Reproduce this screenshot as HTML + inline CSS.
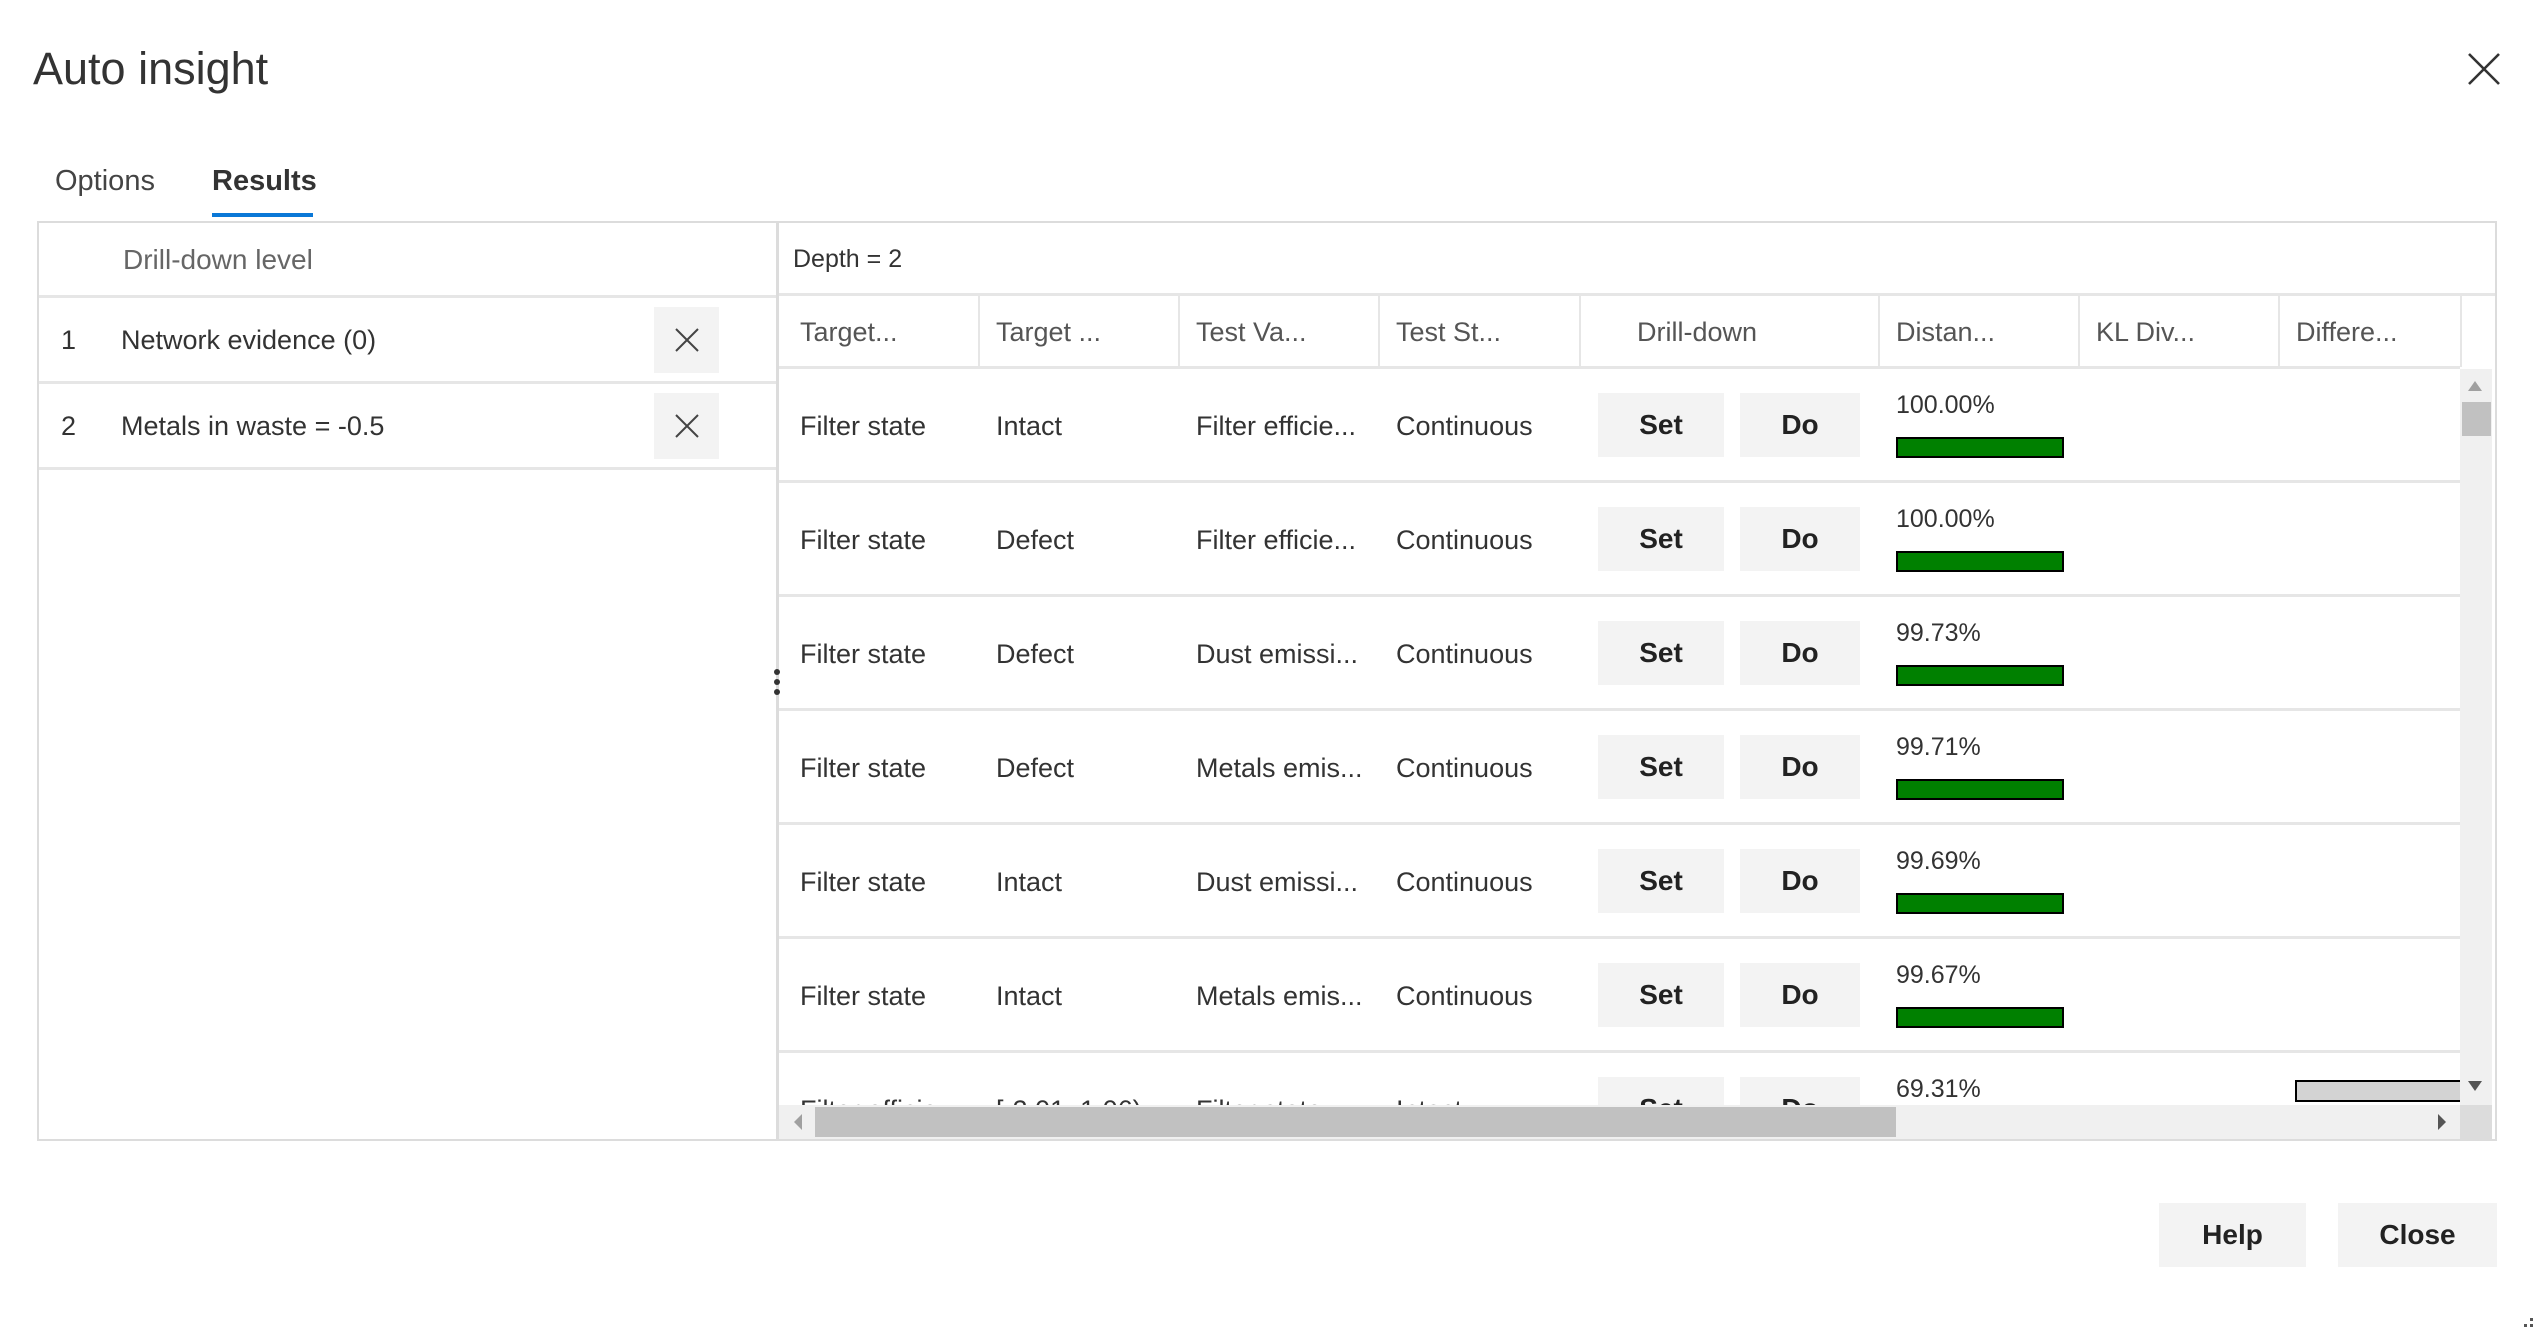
<!DOCTYPE html>
<html><head><meta charset="utf-8"><style>
*{margin:0;padding:0;box-sizing:border-box}
body{width:2534px;height:1330px;background:#fff;font-family:"Liberation Sans",sans-serif;color:#333;position:relative;overflow:hidden}
.a{position:absolute;white-space:nowrap}
.t{font-size:27px;line-height:32px}
.btn{position:absolute;background:#f3f3f3;font-weight:bold;font-size:28px;display:flex;align-items:center;justify-content:center;color:#222}
.hl{position:absolute;background:#e6e6e6}
.bar{position:absolute;width:168px;height:21px;background:#008000;border:2px solid #000}
</style></head><body>
<div class="a" style="left:33px;top:42px;font-size:45px;line-height:54px;color:#333">Auto insight</div>
<svg class="a" style="left:2467px;top:52px" width="34" height="34" viewBox="0 0 34 34"><path d="M2 2L32 32M32 2L2 32" stroke="#333" stroke-width="2.6"/></svg>
<div class="a" style="left:55px;top:163px;font-size:29px;line-height:36px;color:#444">Options</div>
<div class="a" style="left:212px;top:163px;font-size:29px;line-height:36px;font-weight:bold;color:#333">Results</div>
<div class="a" style="left:212px;top:213px;width:101px;height:4px;background:#0a78d7"></div>

<div class="a" style="left:37px;top:221px;width:2460px;height:920px;border:2px solid #dcdcdc"></div>
<!-- left panel -->
<div class="a" style="left:776px;top:221px;width:3px;height:920px;background:#dcdcdc"></div>
<div class="a t" style="left:123px;top:244px;color:#666;font-size:28px">Drill-down level</div>
<div class="hl" style="left:39px;top:295px;width:737px;height:3px"></div>
<div class="a t" style="left:61px;top:324px">1</div>
<div class="a t" style="left:121px;top:324px">Network evidence (0)</div>
<div class="btn" style="left:654px;top:307px;width:65px;height:66px;font-weight:normal"><svg width="24" height="24" viewBox="0 0 24 24"><path d="M1 1L23 23M23 1L1 23" stroke="#444" stroke-width="2"/></svg></div>
<div class="hl" style="left:39px;top:381px;width:737px;height:3px"></div>
<div class="a t" style="left:61px;top:410px">2</div>
<div class="a t" style="left:121px;top:410px">Metals in waste = -0.5</div>
<div class="btn" style="left:654px;top:393px;width:65px;height:66px;font-weight:normal"><svg width="24" height="24" viewBox="0 0 24 24"><path d="M1 1L23 23M23 1L1 23" stroke="#444" stroke-width="2"/></svg></div>
<div class="hl" style="left:39px;top:467px;width:737px;height:3px"></div>
<svg class="a" style="left:773px;top:668px" width="8" height="28"><circle cx="4" cy="4" r="3" fill="#333"/><circle cx="4" cy="14" r="3" fill="#333"/><circle cx="4" cy="24" r="3" fill="#333"/></svg>

<!-- right panel -->
<div class="a t" style="left:793px;top:243px;font-size:25px">Depth = 2</div>
<div class="hl" style="left:779px;top:293px;width:1716px;height:3px"></div>
<div class="hl" style="left:779px;top:366px;width:1681px;height:3px"></div>
<div class="hl" style="left:978px;top:295px;width:2px;height:72px"></div>
<div class="hl" style="left:1178px;top:295px;width:2px;height:72px"></div>
<div class="hl" style="left:1378px;top:295px;width:2px;height:72px"></div>
<div class="hl" style="left:1579px;top:295px;width:2px;height:72px"></div>
<div class="hl" style="left:1878px;top:295px;width:2px;height:72px"></div>
<div class="hl" style="left:2078px;top:295px;width:2px;height:72px"></div>
<div class="hl" style="left:2278px;top:295px;width:2px;height:72px"></div>
<div class="hl" style="left:2460px;top:295px;width:2px;height:72px"></div>
<div class="a t" style="left:800px;top:316px;color:#555">Target...</div>
<div class="a t" style="left:996px;top:316px;color:#555">Target ...</div>
<div class="a t" style="left:1196px;top:316px;color:#555">Test Va...</div>
<div class="a t" style="left:1396px;top:316px;color:#555">Test St...</div>
<div class="a t" style="left:1637px;top:316px;color:#555">Drill-down</div>
<div class="a t" style="left:1896px;top:316px;color:#555">Distan...</div>
<div class="a t" style="left:2096px;top:316px;color:#555">KL Div...</div>
<div class="a t" style="left:2296px;top:316px;color:#555">Differe...</div>

<div class="a" style="left:779px;top:369px;width:1681px;height:736px;overflow:hidden">
<div style="position:absolute;left:0;top:0;width:1681px">
<!-- rows inserted -->
<div style="position:absolute;left:0;top:0;width:1681px;height:114px">
<div class="a t" style="left:21px;top:41px">Filter state</div><div class="a t" style="left:217px;top:41px">Intact</div><div class="a t" style="left:417px;top:41px">Filter efficie...</div><div class="a t" style="left:617px;top:41px">Continuous</div>
<div class="btn" style="left:819px;top:24px;width:126px;height:64px">Set</div><div class="btn" style="left:961px;top:24px;width:120px;height:64px">Do</div>
<div class="a t" style="left:1117px;top:20px;font-size:25px">100.00%</div><div class="bar" style="left:1117px;top:68px"></div>
<div class="hl" style="left:0;top:111px;width:1681px;height:3px"></div></div>
<div style="position:absolute;left:0;top:114px;width:1681px;height:114px">
<div class="a t" style="left:21px;top:41px">Filter state</div><div class="a t" style="left:217px;top:41px">Defect</div><div class="a t" style="left:417px;top:41px">Filter efficie...</div><div class="a t" style="left:617px;top:41px">Continuous</div>
<div class="btn" style="left:819px;top:24px;width:126px;height:64px">Set</div><div class="btn" style="left:961px;top:24px;width:120px;height:64px">Do</div>
<div class="a t" style="left:1117px;top:20px;font-size:25px">100.00%</div><div class="bar" style="left:1117px;top:68px"></div>
<div class="hl" style="left:0;top:111px;width:1681px;height:3px"></div></div>
<div style="position:absolute;left:0;top:228px;width:1681px;height:114px">
<div class="a t" style="left:21px;top:41px">Filter state</div><div class="a t" style="left:217px;top:41px">Defect</div><div class="a t" style="left:417px;top:41px">Dust emissi...</div><div class="a t" style="left:617px;top:41px">Continuous</div>
<div class="btn" style="left:819px;top:24px;width:126px;height:64px">Set</div><div class="btn" style="left:961px;top:24px;width:120px;height:64px">Do</div>
<div class="a t" style="left:1117px;top:20px;font-size:25px">99.73%</div><div class="bar" style="left:1117px;top:68px"></div>
<div class="hl" style="left:0;top:111px;width:1681px;height:3px"></div></div>
<div style="position:absolute;left:0;top:342px;width:1681px;height:114px">
<div class="a t" style="left:21px;top:41px">Filter state</div><div class="a t" style="left:217px;top:41px">Defect</div><div class="a t" style="left:417px;top:41px">Metals emis...</div><div class="a t" style="left:617px;top:41px">Continuous</div>
<div class="btn" style="left:819px;top:24px;width:126px;height:64px">Set</div><div class="btn" style="left:961px;top:24px;width:120px;height:64px">Do</div>
<div class="a t" style="left:1117px;top:20px;font-size:25px">99.71%</div><div class="bar" style="left:1117px;top:68px"></div>
<div class="hl" style="left:0;top:111px;width:1681px;height:3px"></div></div>
<div style="position:absolute;left:0;top:456px;width:1681px;height:114px">
<div class="a t" style="left:21px;top:41px">Filter state</div><div class="a t" style="left:217px;top:41px">Intact</div><div class="a t" style="left:417px;top:41px">Dust emissi...</div><div class="a t" style="left:617px;top:41px">Continuous</div>
<div class="btn" style="left:819px;top:24px;width:126px;height:64px">Set</div><div class="btn" style="left:961px;top:24px;width:120px;height:64px">Do</div>
<div class="a t" style="left:1117px;top:20px;font-size:25px">99.69%</div><div class="bar" style="left:1117px;top:68px"></div>
<div class="hl" style="left:0;top:111px;width:1681px;height:3px"></div></div>
<div style="position:absolute;left:0;top:570px;width:1681px;height:114px">
<div class="a t" style="left:21px;top:41px">Filter state</div><div class="a t" style="left:217px;top:41px">Intact</div><div class="a t" style="left:417px;top:41px">Metals emis...</div><div class="a t" style="left:617px;top:41px">Continuous</div>
<div class="btn" style="left:819px;top:24px;width:126px;height:64px">Set</div><div class="btn" style="left:961px;top:24px;width:120px;height:64px">Do</div>
<div class="a t" style="left:1117px;top:20px;font-size:25px">99.67%</div><div class="bar" style="left:1117px;top:68px"></div>
<div class="hl" style="left:0;top:111px;width:1681px;height:3px"></div></div>
<div style="position:absolute;left:0;top:684px;width:1681px;height:114px">
<div class="a t" style="left:21px;top:41px">Filter efficie...</div><div class="a t" style="left:217px;top:41px">[-2.01, 1.06)</div><div class="a t" style="left:417px;top:41px">Filter state</div><div class="a t" style="left:617px;top:41px">Intact</div>
<div class="btn" style="left:819px;top:24px;width:126px;height:64px">Set</div><div class="btn" style="left:961px;top:24px;width:120px;height:64px">Do</div>
<div class="a t" style="left:1117px;top:20px;font-size:25px">69.31%</div>
<div class="a" style="left:1516px;top:27px;width:170px;height:22px;background:#d3d3d3;border:2px solid #000"></div></div>
</div></div>

<!-- vertical scrollbar -->
<div class="a" style="left:2460px;top:369px;width:32px;height:770px;background:#f0f0f0"></div>
<svg class="a" style="left:2467px;top:380px" width="16" height="12"><path d="M8 1L15 11H1Z" fill="#a0a0a0"/></svg>
<div class="a" style="left:2462px;top:402px;width:29px;height:34px;background:#c1c1c1"></div>
<svg class="a" style="left:2467px;top:1080px" width="16" height="12"><path d="M1 1H15L8 11Z" fill="#555"/></svg>
<!-- horizontal scrollbar -->
<div class="a" style="left:779px;top:1105px;width:1681px;height:34px;background:#f0f0f0"></div>
<svg class="a" style="left:792px;top:1113px" width="12" height="18"><path d="M10 1V17L2 9Z" fill="#a0a0a0"/></svg>
<div class="a" style="left:815px;top:1107px;width:1081px;height:30px;background:#c1c1c1"></div>
<svg class="a" style="left:2436px;top:1113px" width="12" height="18"><path d="M2 1V17L10 9Z" fill="#555"/></svg>
<div class="a" style="left:2460px;top:1105px;width:32px;height:34px;background:#dcdcdc"></div>

<div class="btn" style="left:2159px;top:1203px;width:147px;height:64px">Help</div>
<div class="btn" style="left:2338px;top:1203px;width:159px;height:64px">Close</div>
<svg class="a" style="left:2522px;top:1316px" width="12" height="14"><rect x="8" y="2" width="3" height="3" fill="#555"/><rect x="8" y="8" width="3" height="3" fill="#555"/><rect x="2" y="8" width="3" height="3" fill="#555"/></svg>
</body></html>
